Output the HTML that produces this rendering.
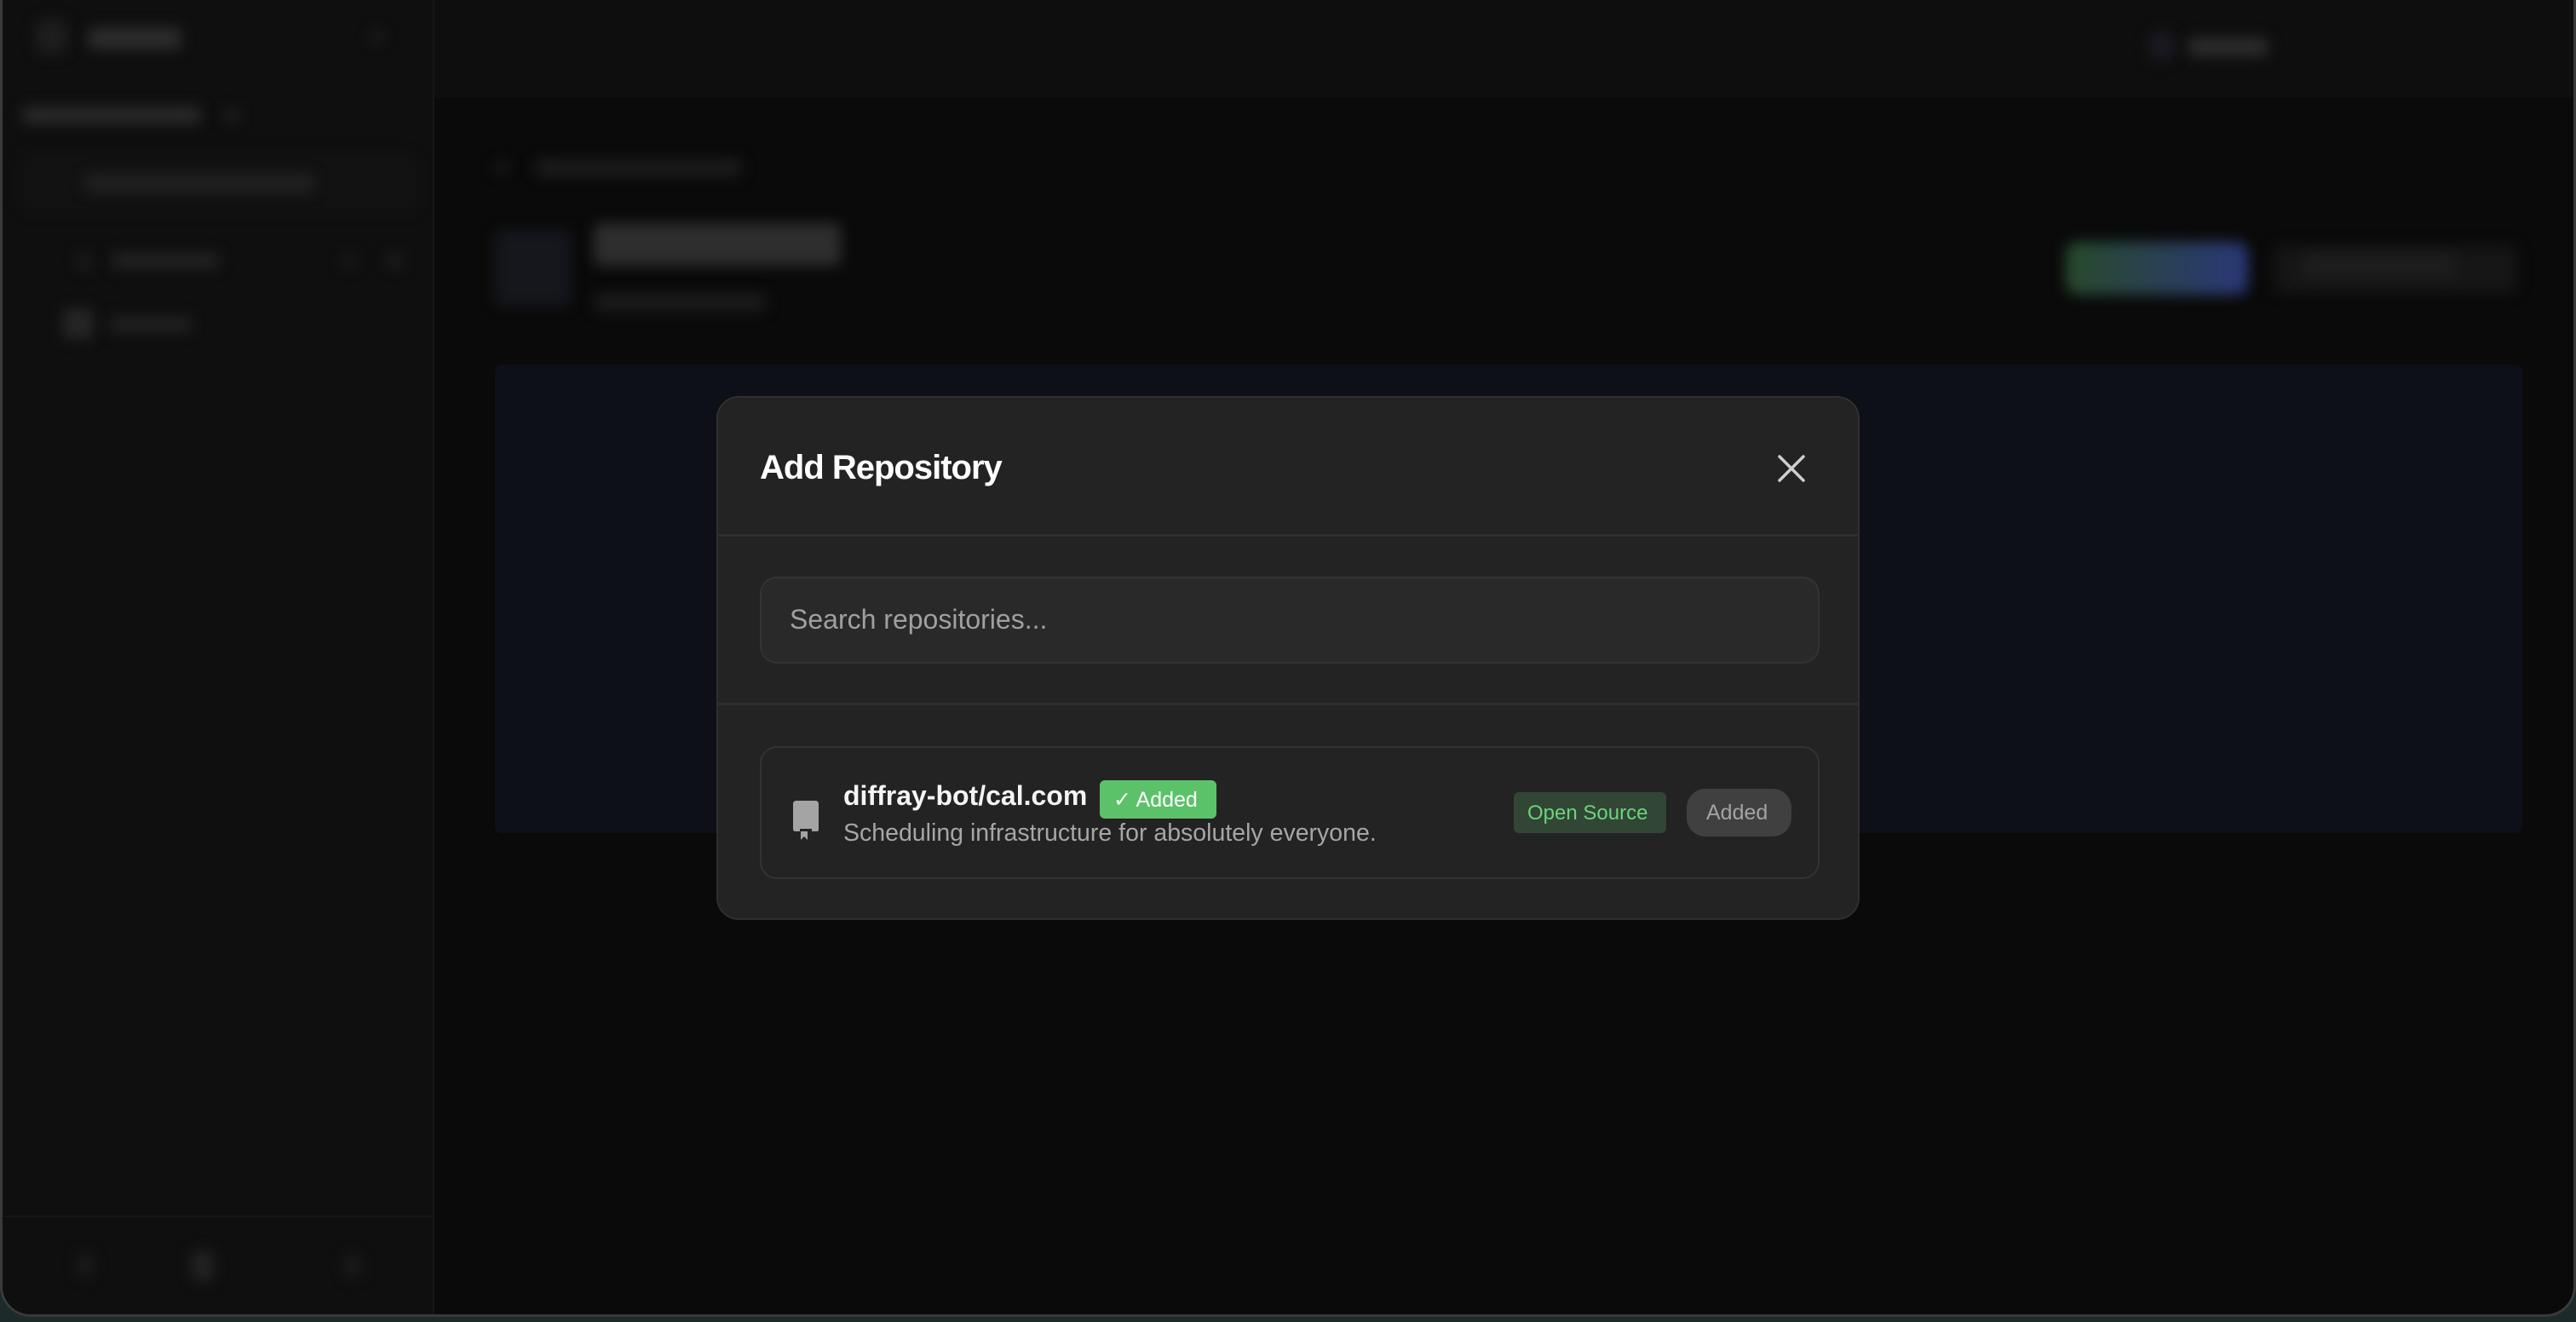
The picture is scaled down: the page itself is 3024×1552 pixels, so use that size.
<!DOCTYPE html>
<html><head><meta charset="utf-8"><style>
*{box-sizing:border-box;margin:0;padding:0}
body{width:3024px;height:1552px;background:#1c2a2a;font-family:"Liberation Sans",sans-serif;overflow:hidden;position:relative}
.win{position:absolute;left:0;top:0;width:3024px;height:1546px;background:#0a0a0a;border-radius:0 0 36px 36px;border:3px solid #3a3a3a;border-top:none;overflow:hidden}
.side{position:absolute;left:0;top:0;width:505px;height:100%;background:#0f0f0f}
.top{position:absolute;left:505px;top:0;right:0;height:115px;background:#0e0e0e}
.bl{position:absolute;filter:blur(8px);background:#262626;border-radius:8px}
.banner{position:absolute;left:578px;top:428px;width:2380px;height:550px;background:#0d1018;border-radius:8px}
.modal{position:absolute;left:841px;top:465px;width:1342px;height:615px;background:#232323;border:2px solid #2f2f2f;border-radius:26px}
.title{position:absolute;left:49px;top:60px;font-size:40px;font-weight:700;color:#fff;letter-spacing:-1px}
.hr{position:absolute;left:0;right:0;height:3px;background:#2e2e2e}
.search{position:absolute;left:49px;top:210px;width:1244px;height:102px;background:#292929;border:2px solid #333;border-radius:20px;font-size:32px;color:#a0a0a0;padding:30px 0 0 33px}
.card{position:absolute;left:49px;top:409px;width:1244px;height:156px;border:2px solid #333;border-radius:20px}
.name{position:absolute;left:96px;top:38px;font-size:32px;font-weight:700;color:#f4f4f4}
.badge{position:absolute;left:397px;top:38px;width:137px;height:45px;background:#5cc26a;border-radius:6px;color:#fff;font-size:25px;padding:8px 0 0 16px}
.desc{position:absolute;left:96px;top:84px;font-size:28.5px;color:#a6a6a6}
.os{position:absolute;left:883px;top:52px;width:179px;height:48px;background:#314634;border-radius:6px;color:#6bd47b;font-size:24px;padding:11px 0 0 16px}
.ad{position:absolute;left:1086px;top:48px;width:123px;height:56px;background:#404040;border-radius:22px;color:#a3a3a3;font-size:25px;padding:14px 0 0 23px}
</style></head><body>
<div class="win">
<div class="side"></div>
<div class="top"></div>
<div class="bl" style="left:505px;top:0;width:2px;height:1546px;background:#161616;filter:none"></div>
<div class="bl" style="left:0;top:1427px;width:505px;height:2px;background:#161616;filter:none"></div>
<!-- sidebar -->
<div class="bl" style="left:39px;top:23px;width:36px;height:40px;background:#1e1e1e"></div>
<div class="bl" style="left:100px;top:32px;width:110px;height:26px;background:#2c2c2c"></div>
<div class="bl" style="left:432px;top:36px;width:14px;height:14px;background:#222"></div>
<div class="bl" style="left:23px;top:125px;width:210px;height:20px;background:#2a2a2a"></div>
<div class="bl" style="left:260px;top:128px;width:18px;height:14px;background:#222"></div>
<div class="bl" style="left:23px;top:183px;width:463px;height:64px;background:#121212;border:2px solid #191919"></div>
<div class="bl" style="left:96px;top:205px;width:270px;height:20px;background:#222"></div>
<div class="bl" style="left:127px;top:297px;width:128px;height:18px;background:#232323"></div>
<div class="bl" style="left:88px;top:297px;width:16px;height:20px;background:#1e1e1e"></div>
<div class="bl" style="left:400px;top:297px;width:14px;height:18px;background:#1c1c1c"></div>
<div class="bl" style="left:452px;top:297px;width:16px;height:18px;background:#222"></div>
<div class="bl" style="left:71px;top:362px;width:36px;height:36px;background:#262626"></div>
<div class="bl" style="left:125px;top:372px;width:97px;height:18px;background:#222"></div>
<div class="bl" style="left:88px;top:1472px;width:18px;height:28px;background:#1c1c1c"></div>
<div class="bl" style="left:222px;top:1468px;width:26px;height:36px;background:#232323"></div>
<div class="bl" style="left:402px;top:1472px;width:18px;height:28px;background:#1c1c1c"></div>
<!-- main -->
<div class="bl" style="left:578px;top:190px;width:16px;height:14px;background:#1c1c1c"></div>
<div class="bl" style="left:625px;top:187px;width:243px;height:20px;background:#1c1c1c"></div>
<div class="bl" style="left:578px;top:270px;width:89px;height:89px;background:#15171d"></div>
<div class="bl" style="left:694px;top:262px;width:290px;height:50px;background:#2e2e2e"></div>
<div class="bl" style="left:694px;top:345px;width:203px;height:20px;background:#1c1c1c"></div>
<div class="bl" style="left:2518px;top:36px;width:34px;height:36px;background:#1a1a22;border-radius:50%"></div>
<div class="bl" style="left:2565px;top:44px;width:95px;height:22px;background:#2c2c2c"></div>
<div class="bl" style="left:2422px;top:284px;width:214px;height:62px;background:linear-gradient(90deg,#284a2c,#2a3878);border-radius:14px"></div>
<div class="bl" style="left:2667px;top:288px;width:284px;height:56px;background:#161616"></div>
<div class="bl" style="left:2700px;top:300px;width:180px;height:26px;background:#1e1e1e"></div>
<div class="banner"></div>
</div>
<div class="modal">
<div class="title">Add Repository</div>
<svg style="position:absolute;left:1243px;top:66px" width="34" height="34" viewBox="0 0 34 34"><path d="M3 3L31 31M31 3L3 31" stroke="#cfcfcf" stroke-width="3.5" stroke-linecap="round"/></svg>
<div class="hr" style="top:160px"></div>
<div class="search">Search repositories...</div>
<div class="hr" style="top:358px"></div>
<div class="card">
<svg style="position:absolute;left:37px;top:62px" width="30" height="46" viewBox="0 0 30 46"><path d="M4 0H26Q30 0 30 4V34Q30 36 28 36H22V33H8V36H3Q0 36 0 33V4Q0 0 4 0Z" fill="#a4a4a4"/><path d="M9 36V46L13 42L17 46V36Z" fill="#a4a4a4"/></svg>
<div class="name">diffray-bot/cal.com</div>
<div class="badge">✓ Added</div>
<div class="desc">Scheduling infrastructure for absolutely everyone.</div>
<div class="os">Open Source</div>
<div class="ad">Added</div>
</div>
</div>
</body></html>
